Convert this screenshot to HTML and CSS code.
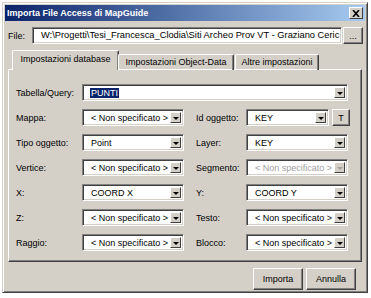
FILE: index.html
```html
<!DOCTYPE html>
<html lang="it">

<head>
    <meta charset="UTF-8">
    <title>Importa File Access di MapGuide</title>
    <link rel="stylesheet" href="styles.css">
</head>

<body>
    <div class="window">
        <div class="titleBar">
            <span class="titleText">Importa File Access di MapGuide</span>
            <span class="closeBtn">
                <svg width="8" height="7" viewBox="0 0 8 7">
                    <path d="M1 0 L7 7 M7 0 L1 7" stroke="#000" stroke-width="1.6"/>
                </svg>
            </span>
        </div>

        <div class="fileRow">
            <label class="fileLabel">File:</label>
            <div class="field fileField">W:\Progetti\Tesi_Francesca_Clodia\Siti Archeo Prov VT - Graziano Ceric</div>
            <button class="btn dotsBtn">...</button>
        </div>

        <div class="tabs">
            <div class="tab active">Impostazioni database</div>
            <div class="tab tab2">Impostazioni Object-Data</div>
            <div class="tab tab3">Altre impostazioni</div>
        </div>

        <div class="panel">
            <div class="grid">
                <label>Tabella/Query:</label>
                <div class="combo wide"><span class="value"><span class="sel">PUNTI</span></span><span class="arrow"></span></div>

                <label>Mappa:</label>
                <div class="combo"><span class="value">&lt; Non specificato &gt;</span><span class="arrow"></span></div>
                <label>Id oggetto:</label>
                <div class="withBtn">
                    <div class="combo short"><span class="value">KEY</span><span class="arrow"></span></div>
                    <button class="btn tBtn">T</button>
                </div>

                <label>Tipo oggetto:</label>
                <div class="combo"><span class="value">Point</span><span class="arrow"></span></div>
                <label>Layer:</label>
                <div class="combo"><span class="value">KEY</span><span class="arrow"></span></div>

                <label>Vertice:</label>
                <div class="combo"><span class="value">&lt; Non specificato &gt;</span><span class="arrow"></span></div>
                <label>Segmento:</label>
                <div class="combo disabled"><span class="value">&lt; Non specificato &gt;</span><span class="arrow"></span></div>

                <label>X:</label>
                <div class="combo"><span class="value">COORD X</span><span class="arrow"></span></div>
                <label>Y:</label>
                <div class="combo"><span class="value">COORD Y</span><span class="arrow"></span></div>

                <label>Z:</label>
                <div class="combo"><span class="value">&lt; Non specificato &gt;</span><span class="arrow"></span></div>
                <label>Testo:</label>
                <div class="combo"><span class="value">&lt; Non specificato &gt;</span><span class="arrow"></span></div>

                <label>Raggio:</label>
                <div class="combo"><span class="value">&lt; Non specificato &gt;</span><span class="arrow"></span></div>
                <label>Blocco:</label>
                <div class="combo"><span class="value">&lt; Non specificato &gt;</span><span class="arrow"></span></div>
            </div>
        </div>

        <div class="buttonBar">
            <button class="btn actionBtn">Importa</button>
            <button class="btn actionBtn">Annulla</button>
        </div>
    </div>
</body>

</html>
```

FILE: styles.css
```css
body {
    margin: 0;
    background: #fff;
    font-family: "Liberation Sans", Arial, sans-serif;
    font-size: 9px;
    color: #000;
}
.window {
    width: 366px;
    height: 291px;
    margin: 2px 0 0 2px;
    box-sizing: border-box;
    background: #d4d0c8;
    border: 1px solid;
    border-color: #d4d0c8 #404040 #404040 #d4d0c8;
    box-shadow: inset 1px 1px #fff, inset -1px -1px #808080;
    padding: 2px;
}
.titleBar {
    height: 16px;
    display: flex;
    align-items: center;
    justify-content: space-between;
    padding: 0 2px 0 2px;
    background: linear-gradient(to right, #0a246a, #a6caf0);
}
.titleText {
    color: #fff;
    font-weight: bold;
    font-size: 9px;
}
.closeBtn {
    width: 12px;
    height: 10px;
    display: flex;
    align-items: center;
    justify-content: center;
    background: #d4d0c8;
    border: 1px solid;
    border-color: #fff #404040 #404040 #fff;
}
.fileRow {
    display: flex;
    align-items: center;
    margin-top: 6px;
    padding-left: 3px;
}
.fileLabel {
    width: 24px;
}
.field {
    background: #fff;
    box-sizing: border-box;
    border: 1px solid;
    border-color: #808080 #fff #fff #808080;
    box-shadow: inset 1px 1px #404040, inset -1px -1px #d4d0c8;
}
.fileField {
    width: 310px;
    height: 17px;
    line-height: 15px;
    padding-left: 8px;
    white-space: nowrap;
    overflow: hidden;
    font-size: 9.3px;
}
.btn {
    font-family: inherit;
    font-size: 9px;
    background: #d4d0c8;
    box-sizing: border-box;
    border: 1px solid;
    border-color: #fff #404040 #404040 #fff;
    box-shadow: inset -1px -1px #808080;
    padding: 0;
    color: #000;
}
.dotsBtn {
    width: 20px;
    height: 17px;
    margin-left: 1px;
    line-height: 10px;
}
.tabs {
    display: flex;
    align-items: flex-end;
    margin-top: 6px;
    padding-left: 7px;
    height: 19px;
    position: relative;
    z-index: 1;
}
.tab {
    width: 116px;
    height: 16px;
    line-height: 15px;
    text-align: center;
    box-sizing: border-box;
    border: 1px solid;
    border-color: #fff #404040 transparent #fff;
    border-bottom: none;
    box-shadow: inset -1px 0 #808080;
    border-radius: 2px 2px 0 0;
    margin-bottom: -1px;
}
.tab.active {
    width: 107px;
    height: 20px;
    line-height: 17px;
    background: #d4d0c8;
    margin-right: -1px;
}
.tab3 {
    width: 84px;
    margin-left: 1px;
}
.panel {
    width: 354px;
    height: 193px;
    margin-left: 3px;
    box-sizing: border-box;
    border: 1px solid;
    border-color: #fff #404040 #404040 #fff;
    box-shadow: inset -1px -1px #808080;
    padding: 14px 0 0 7px;
}
.grid {
    display: grid;
    grid-template-columns: 66px 114px 50px 104px;
    grid-auto-rows: 17px;
    row-gap: 8px;
    align-items: center;
}
.combo {
    width: 102px;
    height: 17px;
    display: flex;
    box-sizing: border-box;
    background: #fff;
    border: 1px solid;
    border-color: #808080 #fff #fff #808080;
    box-shadow: inset 1px 1px #404040, inset -1px -1px #d4d0c8;
    padding: 2px;
}
.combo.wide {
    grid-column: span 3;
    width: 266px;
}
.value {
    flex: 1;
    line-height: 12px;
    padding-left: 6px;
    white-space: nowrap;
    overflow: hidden;
}
.sel {
    background: #0a246a;
    color: #fff;
    padding: 0 1px;
    margin-left: -1px;
}
.arrow {
    width: 11px;
    box-sizing: border-box;
    background: #d4d0c8;
    border: 1px solid;
    border-color: #fff #404040 #404040 #fff;
    position: relative;
}
.arrow::after {
    content: "";
    position: absolute;
    left: 2px;
    top: 4px;
    border-left: 3px solid transparent;
    border-right: 3px solid transparent;
    border-top: 3px solid #000;
}
.combo.disabled .value {
    color: #a0a0a0;
}
.combo.disabled .arrow::after {
    border-top-color: #a0a0a0;
}
.withBtn {
    display: flex;
    align-items: center;
    gap: 3px;
}
.combo.short {
    width: 83px;
}
.tBtn {
    width: 18px;
    height: 17px;
}
.buttonBar {
    display: flex;
    justify-content: flex-end;
    gap: 3px;
    margin-top: 6px;
    padding-right: 9px;
}
.actionBtn {
    width: 50px;
    height: 22px;
}
```
